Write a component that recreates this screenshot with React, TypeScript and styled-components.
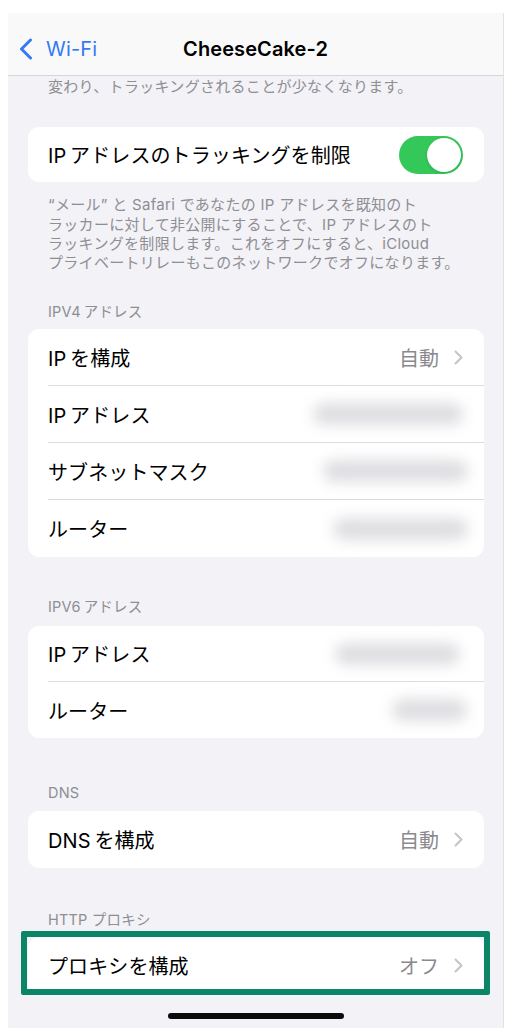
import React from "react";
import styled, { createGlobalStyle } from "styled-components";

const GlobalStyle = createGlobalStyle`
  html, body { margin: 0; padding: 0; background: #ffffff; }
  body {
    font-family: "Inter", "Noto Sans CJK JP", sans-serif;
    -webkit-font-smoothing: antialiased;
  }
  * { box-sizing: border-box; }
`;

const Page = styled.div`
  width: 513px;
  height: 1034px;
  padding: 13px 9px 6px 8px;
  background: #ffffff;
`;

const Frame = styled.div`
  height: 100%;
  background: #f2f2f7;
  border-right: 1px solid #e2e2e6;
  display: flex;
  flex-direction: column;
  position: relative;
`;

const NavBar = styled.header`
  height: 63px;
  padding-top: 9px;
  background: #f9f9f9;
  border-bottom: 1px solid #d6d6da;
  display: grid;
  grid-template-columns: 1fr auto 1fr;
  align-items: center;
`;

const BackButton = styled.div`
  display: flex;
  align-items: center;
  gap: 13px;
  padding-left: 11px;
  color: #3479f6;
  font-size: 20px;
  letter-spacing: 0.2px;
`;

const Title = styled.div`
  font-size: 20px;
  font-weight: 600;
  color: #000;
  letter-spacing: 0.1px;
`;

const Content = styled.main`
  flex: 1;
  padding: 1px 19px 0 20px;
  display: flex;
  flex-direction: column;
`;

const Note = styled.p<{ $top?: number }>`
  margin: ${(p) => p.$top ?? 0}px 0 0;
  padding: 0 20px;
  font-size: 15px;
  line-height: 19.3px;
  color: #8e8e93;
  letter-spacing: 0.3px;
`;

const Header = styled.div<{ $top: number }>`
  margin-top: ${(p) => p.$top}px;
  padding: 0 20px;
  font-size: 14.5px;
  line-height: 19px;
  color: #8e8e93;
  letter-spacing: 0.2px;
`;

const Card = styled.section<{ $top: number; $highlight?: boolean }>`
  margin-top: ${(p) => p.$top}px;
  background: #ffffff;
  border-radius: 11px;
  position: relative;
  ${(p) =>
    p.$highlight
      ? `
    &::after {
      content: "";
      position: absolute;
      top: -6px; left: -7px; right: -6px; bottom: -1px;
      border: 6px solid #0b8568;
      border-radius: 2px;
      pointer-events: none;
    }
  `
      : ""}
`;

const Row = styled.div<{ $h: number; $sep?: boolean }>`
  height: ${(p) => p.$h}px;
  margin-left: 20px;
  padding-right: 21px;
  display: flex;
  align-items: center;
  justify-content: space-between;
  border-bottom: ${(p) => (p.$sep ? "1px solid #dcdce0" : "none")};
`;

const Label = styled.span`
  font-size: 20px;
  color: #000;
  letter-spacing: 0.1px;
`;

const Value = styled.span`
  display: flex;
  align-items: center;
  gap: 15px;
  font-size: 20px;
  color: #8a8a8e;
`;

const Blur = styled.span<{ $w: number; $shift?: number }>`
  display: block;
  width: ${(p) => p.$w}px;
  height: 22px;
  margin-right: ${(p) => p.$shift ?? 0}px;
  border-radius: 11px;
  background: #dedee2;
  filter: blur(7px);
`;

const Toggle = styled.span`
  width: 64px;
  height: 38px;
  border-radius: 19px;
  background: #34c759;
  padding: 2px;
  display: flex;
  justify-content: flex-end;
`;

const Knob = styled.span`
  width: 34px;
  height: 34px;
  border-radius: 50%;
  background: #ffffff;
  box-shadow: 0 1px 3px rgba(0, 0, 0, 0.15);
`;

const HomeBar = styled.div`
  position: absolute;
  left: 160px;
  bottom: 9px;
  width: 176px;
  height: 6px;
  border-radius: 3px;
  background: #0a0a0a;
`;

const Chevron = () => (
  <svg width="9" height="15" viewBox="0 0 9 15" fill="none">
    <path d="M1.5 1.5 L7.5 7.5 L1.5 13.5" stroke="#c4c4c7" strokeWidth="2" strokeLinecap="round" strokeLinejoin="round" />
  </svg>
);

const BackChevron = () => (
  <svg width="14" height="22" viewBox="0 0 14 22" fill="none">
    <path d="M11.5 2 L2.5 11 L11.5 20" stroke="#3479f6" strokeWidth="3" strokeLinecap="round" strokeLinejoin="round" />
  </svg>
);

export default function App() {
  return (
    <>
      <GlobalStyle />
      <Page>
        <Frame>
          <NavBar>
            <BackButton>
              <BackChevron />
              <span>Wi-Fi</span>
            </BackButton>
            <Title>CheeseCake-2</Title>
            <div />
          </NavBar>
          <Content>
            <Note>変わり、トラッキングされることが少なくなります。</Note>

            <Card $top={31}>
              <Row $h={55}>
                <Label>IP{"\u2009"}アドレスのトラッキングを制限</Label>
                <Toggle>
                  <Knob />
                </Toggle>
              </Row>
            </Card>
            <Note $top={13}>
              “メール” と Safari であなたの IP アドレスを既知のト
              <br />
              ラッカーに対して非公開にすることで、IP アドレスのト
              <br />
              ラッキングを制限します。これをオフにすると、iCloud
              <br />
              プライベートリレーもこのネットワークでオフになります。
            </Note>

            <Header $top={30}>IPV4{"\u2009"}アドレス</Header>
            <Card $top={8}>
              <Row $h={57} $sep>
                <Label>IP{"\u2009"}を構成</Label>
                <Value>
                  自動
                  <Chevron />
                </Value>
              </Row>
              <Row $h={57} $sep>
                <Label>IP{"\u2009"}アドレス</Label>
                <Blur $w={150} />
              </Row>
              <Row $h={57} $sep>
                <Label>サブネットマスク</Label>
                <Blur $w={145} $shift={-5} />
              </Row>
              <Row $h={57}>
                <Label>ルーター</Label>
                <Blur $w={135} $shift={-5} />
              </Row>
            </Card>

            <Header $top={40}>IPV6{"\u2009"}アドレス</Header>
            <Card $top={10}>
              <Row $h={56} $sep>
                <Label>IP{"\u2009"}アドレス</Label>
                <Blur $w={125} $shift={3} />
              </Row>
              <Row $h={56}>
                <Label>ルーター</Label>
                <Blur $w={75} $shift={-4} />
              </Row>
            </Card>

            <Header $top={45}>DNS</Header>
            <Card $top={9}>
              <Row $h={57}>
                <Label>DNS{"\u2009"}を構成</Label>
                <Value>
                  自動
                  <Chevron />
                </Value>
              </Row>
            </Card>

            <Header $top={42}>HTTP プロキシ</Header>
            <Card $top={8} $highlight>
              <Row $h={57}>
                <Label>プロキシを構成</Label>
                <Value>
                  オフ
                  <Chevron />
                </Value>
              </Row>
            </Card>
          </Content>
          <HomeBar />
        </Frame>
      </Page>
    </>
  );
}
